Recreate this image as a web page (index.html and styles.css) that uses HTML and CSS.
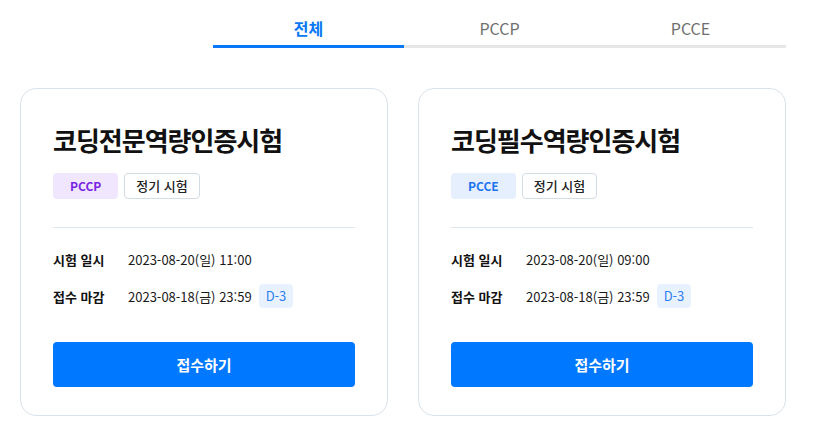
FILE: index.html
```html
<!DOCTYPE html>
<html lang="ko">
<head>
<meta charset="utf-8">
<link rel="stylesheet" href="styles.css">
</head>
<body>
<div class="page">
  <nav class="tabs">
    <div class="tab active">전체</div>
    <div class="tab">PCCP</div>
    <div class="tab">PCCE</div>
  </nav>
  <div class="cards">
    <div class="card">
      <h2 class="title">코딩전문역량인증시험</h2>
      <div class="badges">
        <span class="badge pccp">PCCP</span>
        <span class="badge outline">정기 시험</span>
      </div>
      <hr class="divider">
      <div class="rows">
        <div class="row"><span class="label">시험 일시</span><span class="value">2023-08-20(일) 11:00</span></div>
        <div class="row"><span class="label">접수 마감</span><span class="value">2023-08-18(금) 23:59</span><span class="dday">D-3</span></div>
      </div>
      <button class="apply">접수하기</button>
    </div>
    <div class="card">
      <h2 class="title">코딩필수역량인증시험</h2>
      <div class="badges">
        <span class="badge pcce">PCCE</span>
        <span class="badge outline">정기 시험</span>
      </div>
      <hr class="divider">
      <div class="rows">
        <div class="row"><span class="label">시험 일시</span><span class="value">2023-08-20(일) 09:00</span></div>
        <div class="row"><span class="label">접수 마감</span><span class="value">2023-08-18(금) 23:59</span><span class="dday">D-3</span></div>
      </div>
      <button class="apply">접수하기</button>
    </div>
  </div>
</div>
</body>
</html>
```
FILE: styles.css
```css
* { box-sizing: border-box; }
body {
  margin: 0;
  background: #fff;
  font-family: "Noto Sans CJK KR", "Noto Sans", sans-serif;
  color: #111;
}
.page {
  width: 766px;
  margin-left: 20px;
}
.tabs {
  display: flex;
  width: 573px;
  margin-left: auto;
}
.tab {
  flex: 1;
  text-align: center;
  font-size: 16px;
  line-height: 20px;
  padding: 18px 0 7px;
  color: #6f6f6f;
  font-weight: 400;
  border-bottom: 3px solid #e6e6e6;
}
.tab.active {
  color: #0a78f5;
  font-weight: 700;
  border-bottom-color: #0a78f5;
}
.cards {
  display: flex;
  gap: 30px;
  margin-top: 40px;
}
.card {
  flex: 1;
  border: 1px solid #dbe3ea;
  border-radius: 16px;
  padding: 32px 32px 28px;
}
.title {
  margin: 0;
  font-size: 26px;
  line-height: 38px;
  letter-spacing: -1px;
  font-weight: 700;
  color: #111;
}
.badges {
  display: flex;
  gap: 6px;
  margin-top: 14px;
}
.badge {
  height: 26px;
  line-height: 26px;
  font-size: 12px;
  border-radius: 4px;
  padding: 0 17px;
  font-weight: 700;
}
.badge.pccp { background: #f0e7fe; color: #7a25e6; }
.badge.pcce { background: #e6effd; color: #1d74f0; }
.badge.outline {
  border: 1px solid #d3dce5;
  line-height: 24px;
  padding: 0 11px;
  font-size: 13px;
  color: #222;
  font-weight: 500;
}
.divider {
  border: 0;
  border-top: 1px solid #dce3ea;
  margin: 28px 0 0;
}
.rows {
  display: flex;
  flex-direction: column;
  gap: 13px;
  margin-top: 19px;
}
.row {
  display: flex;
  align-items: center;
  height: 24px;
  font-size: 13px;
}
.label {
  width: 75px;
  font-weight: 700;
  color: #111;
}
.value {
  color: #1a1a1a;
}
.dday {
  margin-left: 7px;
  height: 24px;
  line-height: 24px;
  padding: 0 7px;
  border-radius: 4px;
  background: #e8f2ff;
  color: #2f7ef0;
  font-size: 13px;
}
.apply {
  display: block;
  width: 100%;
  height: 45px;
  margin-top: 34px;
  border: 0;
  border-radius: 4px;
  background: #0078ff;
  color: #fff;
  font-family: inherit;
  font-size: 15px;
  font-weight: 700;
}
```
